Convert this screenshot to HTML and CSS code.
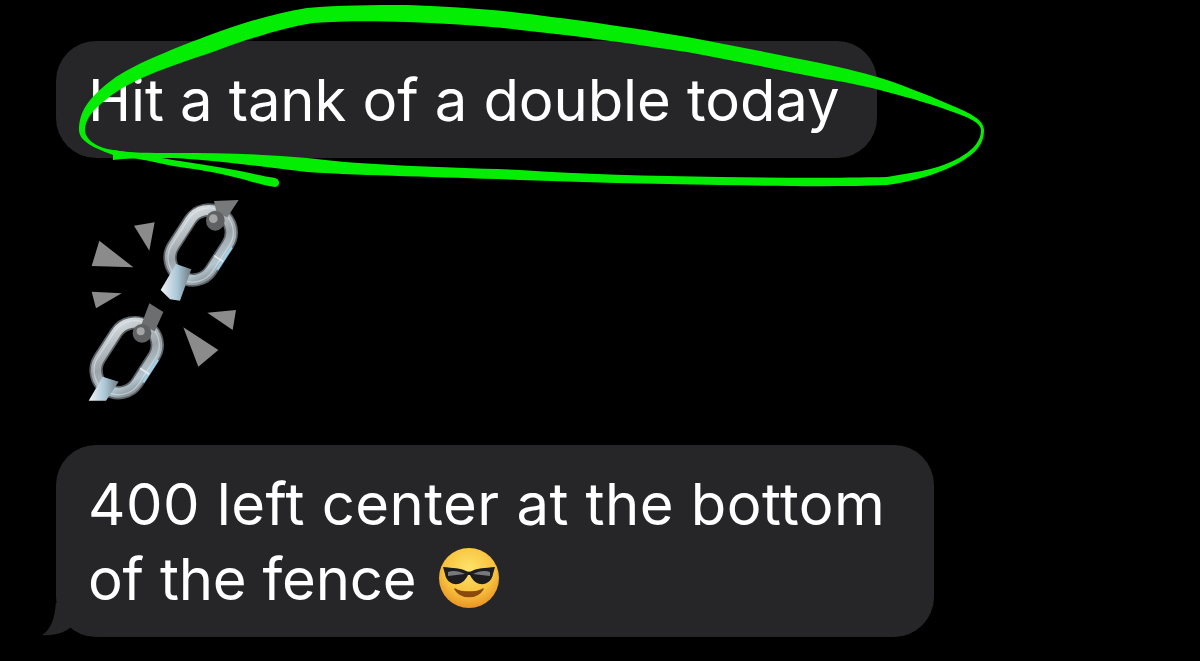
FILE: index.html
```html
<!DOCTYPE html>
<html lang="en">
<head>
    <meta charset="UTF-8">
    <title>Messages</title>
    <link rel="stylesheet" href="styles.css">
</head>
<body>
    <div class="bubble bubble-first">Hit a tank of a double today</div>

    <svg class="chain" viewBox="0 0 540 660" width="180" height="220">
        <defs>
            <linearGradient id="steel" x1="0" y1="0" x2="1" y2="1">
                <stop offset="0" stop-color="#d9dfe3"/>
                <stop offset="0.5" stop-color="#9ba3a8"/>
                <stop offset="0.8" stop-color="#b4c6d0"/>
                <stop offset="1" stop-color="#7b8287"/>
            </linearGradient>
            <linearGradient id="sleeve" x1="0" y1="0" x2="1" y2="0">
                <stop offset="0" stop-color="#f0f4f6"/>
                <stop offset="0.55" stop-color="#a9c6d6"/>
                <stop offset="1" stop-color="#6f7a80"/>
            </linearGradient>
        </defs>
        <g fill="#8b8b8b">
            <polygon points="65,228 88,152 190,232"/>
            <polygon points="192,107 254,97 238,182"/>
            <polygon points="65,305 155,310 78,355"/>
            <polygon points="412,368 498,360 488,420"/>
            <polygon points="340,412 445,480 385,530"/>
        </g>
        <!-- top link -->
        <g transform="rotate(33 392 165)">
            <rect class="link-base" x="325" y="53" width="134" height="224" rx="66"/>
            <rect class="link-steel" x="325" y="53" width="134" height="224" rx="66"/>
            <rect class="link-shine" x="319" y="47" width="146" height="236" rx="72"/>
            <path class="link-blue" d="M474,120 V200"/>
            <path class="link-band" d="M443,170 H476"/>
        </g>
        <polygon points="432,33 506,30 472,82 440,70" fill="#77797b"/>
        <ellipse cx="436" cy="92" rx="28" ry="30" fill="#5f6163"/>
        <ellipse cx="430" cy="86" rx="13" ry="13" fill="#a3a5a7"/>
        <polygon points="272,300 318,222 364,238 330,332 300,328" fill="url(#sleeve)"/>
        <!-- bottom link -->
        <g transform="rotate(33 170 503)">
            <rect class="link-base" x="103" y="391" width="134" height="224" rx="66"/>
            <rect class="link-steel" x="103" y="391" width="134" height="224" rx="66"/>
            <rect class="link-shine" x="97" y="385" width="146" height="236" rx="72"/>
            <path class="link-blue" d="M252,458 V538"/>
            <path class="link-band" d="M221,508 H254"/>
        </g>
        <polygon points="238,340 280,366 254,424 214,404" fill="#6c6e70"/>
        <ellipse cx="216" cy="430" rx="28" ry="28" fill="#5f6163"/>
        <ellipse cx="212" cy="424" rx="12" ry="12" fill="#a3a5a7"/>
        <polygon points="56,632 98,560 146,575 108,632" fill="url(#sleeve)"/>
    </svg>

    <div class="bubble bubble-last">
        <svg class="tail" viewBox="0 6 64 34" width="64" height="34">
            <path d="M14,0 C14,18 10,32 0,38 C12,39 24,36 31,28 C40,36 52,40 64,40 L64,0 Z" fill="#262628"/>
        </svg>
        <span class="line-wide">400 left center at the bottom</span><br>
        of the fence<svg class="smiley" viewBox="0 0 60 60" width="60" height="60">
            <defs>
                <radialGradient id="face" cx="0.5" cy="0.35" r="0.7">
                    <stop offset="0" stop-color="#fde36a"/>
                    <stop offset="0.6" stop-color="#f8c23e"/>
                    <stop offset="1" stop-color="#e58a1f"/>
                </radialGradient>
            </defs>
            <circle cx="30" cy="30" r="30" fill="url(#face)"/>
            <path d="M4,19 C14,20 22,20 27,23 C29,24 31,24 33,23 C38,20 46,20 56,19 L54,26 C53,33 47,37 41,36 C36,35 33,31 31,27 H29 C27,31 24,35 19,36 C13,37 7,33 6,26 Z" fill="#1d1d1f"/>
            <path d="M9,24 C14,22 20,23 26,26 L9,28 Z M34,26 C40,23 46,22 51,24 L51,28 Z" fill="#77797c"/>
            <path d="M16,41 C22,51 38,51 44,41 C38,45 22,45 16,41 Z" fill="#8a4a0c" stroke="#8a4a0c" stroke-width="1.5" stroke-linejoin="round"/>
        </svg>
    </div>

    <svg class="scribble" viewBox="0 0 1200 661" width="1200" height="661">
        <path class="loop" d="M79,130 C79,112 88,98 112,80 C130,66 170,50 207,36 C240,24 270,14 307,8 C340,5 373,5 407,5 C440,6 490,9 520,13 C580,20 640,29 687,37 C730,45 780,55 820,63 C845,68 868,74 887,80 C910,88 935,98 953,106 C970,113 984,120 984,130 C984,145 975,155 953,166 C935,175 910,182 887,185 C840,187 780,186 720,185 C650,184 580,182 520,180 C450,177 370,176 307,172 C260,166 210,160 173,158 C150,158 130,158 113,160 L113,155 C100,150 79,143 79,130 Z M85,130 C85,140 98,148 113,150 C130,153 150,153 173,153 C220,153 265,154 307,158 C370,166 450,167 520,170 C580,174 650,176 720,177 C780,178 840,178 887,177 C910,173 935,170 953,161 C970,153 981,143 981,130 C981,123 968,117 953,112 C935,105 910,98 887,92 C865,86 845,82 820,78 C780,70 730,60 687,52 C640,45 580,36 520,30 C490,26 440,23 407,22 C373,21 340,21 313,23 C280,28 240,42 207,54 C170,66 130,80 108,98 C92,110 85,120 85,130 Z"/>
        <path class="loop" d="M113,150 C135,153 155,157 173,160 C200,164 225,168 245,172 C258,175 268,177 275,178 C280,179 281,186 275,187 C265,186 250,181 238,178 C220,173 195,169 173,166 C150,161 130,157 113,155 Z"/>
    </svg>
</body>
</html>
```

FILE: styles.css
```css
body {
    margin: 0;
    width: 1200px;
    height: 661px;
    overflow: hidden;
    position: relative;
    box-sizing: border-box;
    padding: 41px 0 0 56px;
    display: flex;
    flex-direction: column;
    align-items: flex-start;
    background: #000;
    color: #fff;
    font-family: Inter, "Liberation Sans", sans-serif;
}

.bubble {
    position: relative;
    background: #262628;
    border-radius: 40px;
    box-sizing: border-box;
    padding: 0 32px;
    font-size: 58px;
    line-height: 75px;
}

.bubble-first {
    width: 821px;
    height: 117px;
    padding-top: 22px;
    letter-spacing: -0.1px;
}

.bubble-last {
    width: 878px;
    height: 192px;
    padding-top: 22px;
    letter-spacing: -0.2px;
}

.line-wide {
    letter-spacing: 0.45px;
}

.chain {
    display: block;
    margin: 32px 0 35px 14px;
}

.link-base,
.link-steel,
.link-shine {
    fill: none;
}

.link-base {
    stroke: #5c6166;
    stroke-width: 40;
}

.link-steel {
    stroke: url(#steel);
    stroke-width: 30;
}

.link-shine {
    stroke: #eef2f4;
    stroke-width: 4;
    opacity: 0.45;
}

.link-blue {
    stroke: #9fd0ea;
    stroke-width: 7;
    fill: none;
}

.link-band {
    stroke: #e6eaec;
    stroke-width: 5;
    fill: none;
}

.tail {
    position: absolute;
    left: -14px;
    bottom: 0;
}

.smiley {
    vertical-align: -8px;
    margin-left: 23px;
}

.scribble {
    position: absolute;
    left: 0;
    top: 0;
    pointer-events: none;
}

.loop {
    fill: #04ee04;
    fill-rule: evenodd;
}
```
